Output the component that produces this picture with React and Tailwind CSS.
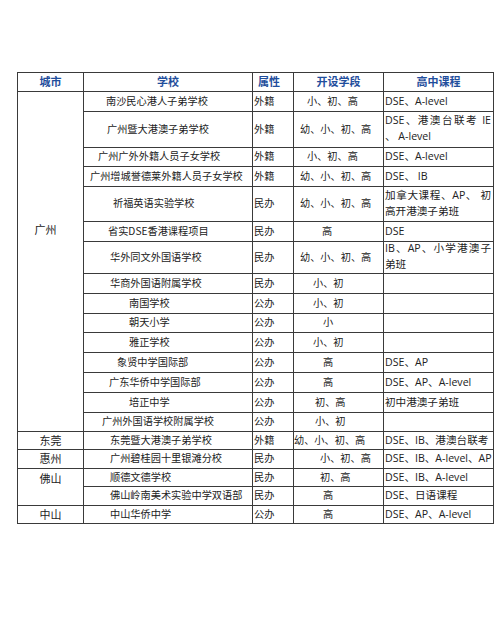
import React from "react";

const rows = [
  { school: "南沙民心港人子弟学校", sl: "pl-[22px]", attr: "外籍", stage: "小、初、高", st: "pl-[13px]", course: "DSE、A-level" },
  { school: "广州暨大港澳子弟学校", sl: "pl-[23px]", attr: "外籍", stage: "幼、小、初、高", st: "pl-[6px]", course: ["DSE、港澳台联考 IE", "、 A-level"] },
  { school: "广州广外外籍人员子女学校", sl: "pl-[14px]", attr: "外籍", stage: "小、初、高", st: "pl-[13px]", course: "DSE、A-level" },
  { school: "广州增城誉德莱外籍人员子女学校", sl: "pl-[6px]", attr: "外籍", stage: "幼、小、初、高", st: "pl-[6px]", course: "DSE、 IB" },
  { school: "祈福英语实验学校", sl: "pl-[29px]", attr: "民办", stage: "幼、小、初、高", st: "pl-[6px]", course: ["加拿大课程、AP、 初", "高开港澳子弟班"] },
  { school: "省实DSE香港课程项目", sl: "pl-[24px]", attr: "民办", stage: "高", st: "pl-[28px]", course: "DSE" },
  { school: "华外同文外国语学校", sl: "pl-[26px]", attr: "民办", stage: "幼、小、初、高", st: "pl-[6px]", course: ["IB、AP、小学港澳子", "弟班"] },
  { school: "华商外国语附属学校", sl: "pl-[26px]", attr: "民办", stage: "小、初", st: "pl-[19px]", course: "" },
  { school: "南国学校", sl: "pl-[45px]", attr: "公办", stage: "小、初", st: "pl-[19px]", course: "" },
  { school: "朝天小学", sl: "pl-[45px]", attr: "公办", stage: "小", st: "pl-[29px]", course: "" },
  { school: "雅正学校", sl: "pl-[45px]", attr: "公办", stage: "小、初", st: "pl-[19px]", course: "" },
  { school: "象贤中学国际部", sl: "pl-[33px]", attr: "公办", stage: "高", st: "pl-[29px]", course: "DSE、AP" },
  { school: "广东华侨中学国际部", sl: "pl-[25px]", attr: "公办", stage: "高", st: "pl-[29px]", course: "DSE、AP、A-level" },
  { school: "培正中学", sl: "pl-[45px]", attr: "公办", stage: "初、高", st: "pl-[21px]", course: "初中港澳子弟班" },
  { school: "广州外国语学校附属学校", sl: "pl-[18px]", attr: "公办", stage: "小、初", st: "pl-[21px]", course: "" },
  { city: "东莞", school: "东莞暨大港澳子弟学校", sl: "pl-[26px]", attr: "外籍", stage: "幼、小、初、高", st: "pl-0", course: "DSE、IB、港澳台联考" },
  { city: "惠州", school: "广州碧桂园十里银滩分校", sl: "pl-[26px]", attr: "民办", stage: "小、初、高", st: "pl-[26px]", course: "DSE、IB、A-level、AP" },
  { city: "佛山", span: true, school: "顺德文德学校", sl: "pl-[26px]", attr: "民办", stage: "初、高", st: "pl-[26px]", course: "DSE、IB、A-level" },
  { school: "佛山岭南美术实验中学双语部", sl: "pl-[26px]", attr: "民办", stage: "高", st: "pl-[29px]", course: "DSE、日语课程" },
  { city: "中山", school: "中山华侨中学", sl: "pl-[26px]", attr: "公办", stage: "高", st: "pl-[29px]", course: "DSE、AP、A-level" },
];

const Head = ({ children, className = "" }) => (
  <div className={`bg-white flex items-center justify-center font-bold text-[11px] text-[#1f4e9c] ${className}`}>
    {children}
  </div>
);

const Course = ({ value }) => {
  if (Array.isArray(value)) {
    return (
      <div className="bg-white flex flex-col justify-center pl-[1px] pr-[2px] pb-[2px] leading-[16px] font-['Open_Sans','Noto_Sans_CJK_SC',sans-serif] text-[10.6px]">
        <div className="text-justify [text-align-last:justify]">{value[0]}</div>
        <div>{value[1]}</div>
      </div>
    );
  }
  return (
    <div className="bg-white flex items-center pl-[1px] whitespace-nowrap font-['Open_Sans','Noto_Sans_CJK_SC',sans-serif] text-[10.6px]">
      {value}
    </div>
  );
};

export default function App() {
  return (
    <div lang="zh-CN" className="w-[500px] h-[625px] bg-white pt-[67px] pl-[17px] font-['Noto_Sans_CJK_SC',sans-serif] text-[#222]">
      <div className="inline-grid grid-cols-[65px_168px_40px_89px_109px] grid-rows-[18px_19px_35px_18px_19px_34px_19px_31px_19px_19px_18px_19px_19px_19px_19px_18px_17px_18px_17px_18px_17px] gap-px p-px bg-[#3a3a3a] text-[10.2px] leading-none">
        <Head>城市</Head>
        <Head>学校</Head>
        <Head className="pr-[8px]">属性</Head>
        <Head>开设学段</Head>
        <Head>高中课程</Head>

        {rows.map((r, i) => (
          <React.Fragment key={i}>
            {i === 0 && (
              <div className="row-span-15 bg-white flex items-center justify-center pb-[64px] pr-[10px] text-[11px]">
                广州
              </div>
            )}
            {r.city && (
              <div
                className={`bg-white flex justify-center text-[11px] ${
                  r.span ? "row-span-2 items-start pt-[4px]" : "items-center"
                }`}
              >
                {r.city}
              </div>
            )}
            <div className={`bg-white flex items-center whitespace-nowrap ${r.sl}`}>{r.school}</div>
            <div className="bg-white flex items-center pl-[1px]">{r.attr}</div>
            <div className={`bg-white flex items-center whitespace-nowrap ${r.st}`}>{r.stage}</div>
            <Course value={r.course} />
          </React.Fragment>
        ))}
      </div>
    </div>
  );
}
